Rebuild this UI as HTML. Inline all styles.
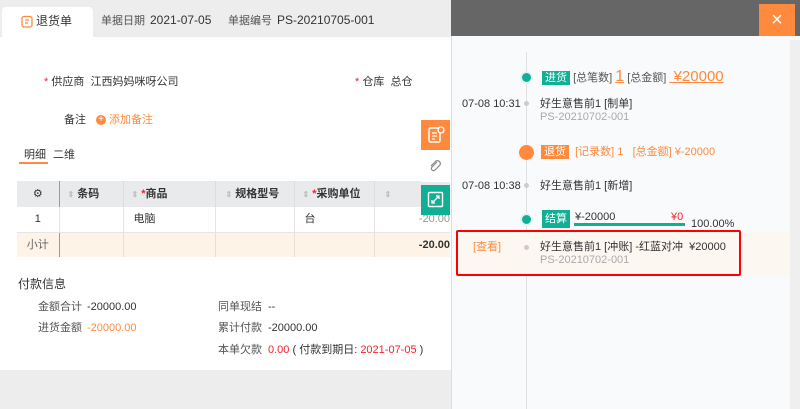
<!DOCTYPE html>
<html><head><meta charset="utf-8"><style>
*{margin:0;padding:0;box-sizing:border-box}
body{width:800px;height:409px;overflow:hidden;background:#ededed;font-family:"Liberation Sans","Noto Sans CJK SC",sans-serif;font-size:11px;color:#333;position:relative;line-height:16px}
.a{position:absolute;white-space:nowrap}
.red{color:#f5222d}
.or{color:#ff8a3d}
.gr{color:#aaa}
.l{color:#555;display:inline-block}
table{border-collapse:collapse}
</style></head><body>
<div class="a" style="left:0;top:37px;width:451px;height:333px;background:#fff"></div>
<div class="a" style="left:2px;top:7px;width:91px;height:31px;background:#fff;border-radius:4px 4px 0 0"></div>
<svg class="a" style="left:21px;top:15px" width="12" height="13" viewBox="0 0 12 13"><rect x="1" y="1.5" width="10" height="10.5" rx="2" fill="none" stroke="#ff8a3d" stroke-width="1.3"/><path d="M4 5h4M4 8h3" stroke="#ff8a3d" stroke-width="1.2"/></svg>
<div class="a" style="left:36px;top:13px;font-size:12px">退货单</div>
<div class="a" style="left:101px;top:12px"><span class="l" style="width:49px">单据日期</span><span style="font-size:12px">2021-07-05</span></div>
<div class="a" style="left:228px;top:12px"><span class="l" style="width:49px">单据编号</span><span style="font-size:12px">PS-20210705-001</span></div>

<div class="a" style="left:44px;top:74px"><span class="red">*</span> 供应商 &nbsp;江西妈妈咪呀公司</div>
<div class="a" style="left:355px;top:74px"><span class="red">*</span> 仓库 &nbsp;总仓</div>
<div class="a" style="left:64px;top:112px">备注</div>
<div class="a" style="left:96px;top:115px;width:10px;height:10px;border-radius:50%;background:#ff8a3d;color:#fff;font-size:10px;line-height:10px;text-align:center">+</div>
<div class="a or" style="left:109px;top:112px">添加备注</div>
<div class="a" style="left:24px;top:147px">明细</div>
<div class="a" style="left:53px;top:147px">二维</div>
<div class="a" style="left:19px;top:162px;width:29px;height:2px;background:#ff8a3d"></div>

<table class="a" style="left:17px;top:181px;font-size:11px">
<tr style="background:#e9eaec;height:26px;font-weight:bold">
<td style="width:42px;text-align:center;border-right:1px solid #999;font-weight:normal">⚙</td>
<td style="width:64px;border-right:1px solid #ddd;padding-left:8px"><span style="color:#bbb;font-size:8px">⇕</span> 条码</td>
<td style="width:92px;border-right:1px solid #ddd;padding-left:8px"><span style="color:#bbb;font-size:8px">⇕</span> <span class="red">*</span>商品</td>
<td style="width:79px;border-right:1px solid #ddd;padding-left:10px"><span style="color:#bbb;font-size:8px">⇕</span> 规格型号</td>
<td style="width:80px;border-right:1px solid #ddd;padding-left:8px"><span style="color:#bbb;font-size:8px">⇕</span> <span class="red">*</span>采购单位</td>
<td style="width:76px;padding-left:10px"><span style="color:#bbb;font-size:8px">⇕</span></td></tr>
<tr style="height:25px;background:#fff;border-bottom:1px solid #e5e5e5">
<td style="text-align:center;border-right:1px solid #e5e5e5">1</td><td style="border-right:1px solid #e5e5e5"></td><td style="border-right:1px solid #e5e5e5;padding-left:10px">电脑</td><td style="border-right:1px solid #e5e5e5"></td><td style="border-right:1px solid #e5e5e5;padding-left:10px">台</td><td style="text-align:right;color:#999">-20.00</td></tr>
<tr style="height:25px;background:#fdf3e6">
<td style="text-align:center;border-right:1px solid #999;color:#666">小计</td><td style="border-right:1px solid #e8e0d4"></td><td style="border-right:1px solid #e8e0d4"></td><td style="border-right:1px solid #e8e0d4"></td><td style="border-right:1px solid #e8e0d4"></td><td style="text-align:right;font-weight:bold">-20.00</td></tr>
</table>

<div class="a" style="left:18px;top:276px;font-size:12px">付款信息</div>
<div class="a" style="left:38px;top:299px"><span class="l" style="width:49px">金额合计</span>-20000.00</div>
<div class="a" style="left:38px;top:320px"><span class="l" style="width:49px">进货金额</span><span class="or">-20000.00</span></div>
<div class="a" style="left:218px;top:299px"><span class="l" style="width:50px">同单现结</span>--</div>
<div class="a" style="left:218px;top:320px"><span class="l" style="width:50px">累计付款</span>-20000.00</div>
<div class="a" style="left:218px;top:342px"><span class="l" style="width:50px">本单欠款</span><span class="red">0.00</span> ( 付款到期日: <span class="red">2021-07-05</span> )</div>

<div class="a" style="left:421px;top:120px;width:29px;height:30px;background:#ff8a3d"></div>
<svg class="a" style="left:427px;top:126px" width="18" height="18" viewBox="0 0 18 18"><rect x="2" y="2" width="11" height="14" rx="1.5" fill="none" stroke="#fff" stroke-width="1.5"/><path d="M5 7h5M5 10h5M5 13h3" stroke="#fff" stroke-width="1.3"/><circle cx="14" cy="4" r="3" fill="#ff8a3d" stroke="#fff" stroke-width="1.3"/></svg>
<div class="a" style="left:421px;top:152px;width:29px;height:30px;background:#fff"></div>
<svg class="a" style="left:428px;top:159px" width="15" height="15" viewBox="0 0 15 15"><path d="M9 3l-5 5a2 2 0 0 0 3 3l5-5a3 3 0 0 0-4-4l-5 5" fill="none" stroke="#888" stroke-width="1.2"/></svg>
<div class="a" style="left:421px;top:185px;width:29px;height:30px;background:#11b095"></div>
<svg class="a" style="left:427px;top:191px" width="17" height="17" viewBox="0 0 17 17"><rect x="1.5" y="1.5" width="14" height="14" rx="1" fill="none" stroke="#fff" stroke-width="1.4"/><path d="M5 12l7-7M9 5h3v3M5 9v3h3" fill="none" stroke="#fff" stroke-width="1.3"/></svg>

<!-- right panel -->
<div class="a" style="left:451px;top:0;width:349px;height:36px;background:#666"></div>
<div class="a" style="left:759px;top:4px;width:36px;height:32px;background:#ff8a3d;color:#fff;font-size:20px;line-height:32px;text-align:center">×</div>
<div class="a" style="left:451px;top:36px;width:349px;height:373px;background:#f9fafc;border-left:1px solid #ddd"></div>
<div class="a" style="left:790px;top:40px;width:10px;height:369px;background:#efefef"></div>
<div class="a" style="left:526px;top:52px;width:1px;height:357px;background:#e0e0e0"></div>
<div class="a" style="left:456px;top:232px;width:334px;height:44px;background:#fdf7f2"></div>

<div class="a" style="left:522px;top:73px;width:9px;height:9px;border-radius:50%;background:#11b095;box-shadow:0 0 0 2px #e0f5f1"></div>
<div class="a" style="left:542px;top:67px;line-height:20px"><span style="background:#11b095;color:#fff;padding:1px 3px">进货</span> <span style="color:#555">[总笔数]</span> <span class="or" style="font-size:16px;text-decoration:underline">1</span> <span style="color:#555">[总金额]</span> <span class="or" style="font-size:15px;text-decoration:underline">&nbsp;¥20000</span></div>

<div class="a" style="left:462px;top:96px">07-08 10:31</div>
<div class="a" style="left:524px;top:101px;width:5px;height:5px;border-radius:50%;background:#ccc"></div>
<div class="a" style="left:540px;top:96px">好生意售前1 [制单]</div>
<div class="a gr" style="left:540px;top:109px">PS-20210702-001</div>

<div class="a" style="left:519px;top:145px;width:15px;height:15px;border-radius:50%;background:#ff8a3d"></div>
<div class="a or" style="left:541px;top:144px"><span style="background:#ff8a3d;color:#fff;padding:1px 3px">退货</span> &nbsp;[记录数] 1 &nbsp;&nbsp;[总金额] ¥-20000</div>

<div class="a" style="left:462px;top:178px">07-08 10:38</div>
<div class="a" style="left:524px;top:183px;width:5px;height:5px;border-radius:50%;background:#ccc"></div>
<div class="a" style="left:540px;top:178px">好生意售前1 [新增]</div>

<div class="a" style="left:522px;top:215px;width:9px;height:9px;border-radius:50%;background:#11b095;box-shadow:0 0 0 2px #e0f5f1"></div>
<div class="a" style="left:542px;top:210px;background:#11b095;color:#fff;padding:1px 3px">结算</div>
<div class="a" style="left:575px;top:209px">¥-20000</div>
<div class="a red" style="left:671px;top:209px">¥0</div>
<div class="a" style="left:574px;top:223px;width:111px;height:3px;background:#11b095"></div>
<div class="a" style="left:691px;top:216px">100.00%</div>

<div class="a" style="left:456px;top:230px;width:285px;height:46px;border:2px solid #f00;border-radius:2px"></div>
<div class="a or" style="left:473px;top:239px">[查看]</div>
<div class="a" style="left:524px;top:245px;width:5px;height:5px;border-radius:50%;background:#ccc"></div>
<div class="a" style="left:540px;top:239px">好生意售前1 [冲账] -红蓝对冲 &nbsp;¥20000</div>
<div class="a gr" style="left:540px;top:252px">PS-20210702-001</div>
</body></html>
